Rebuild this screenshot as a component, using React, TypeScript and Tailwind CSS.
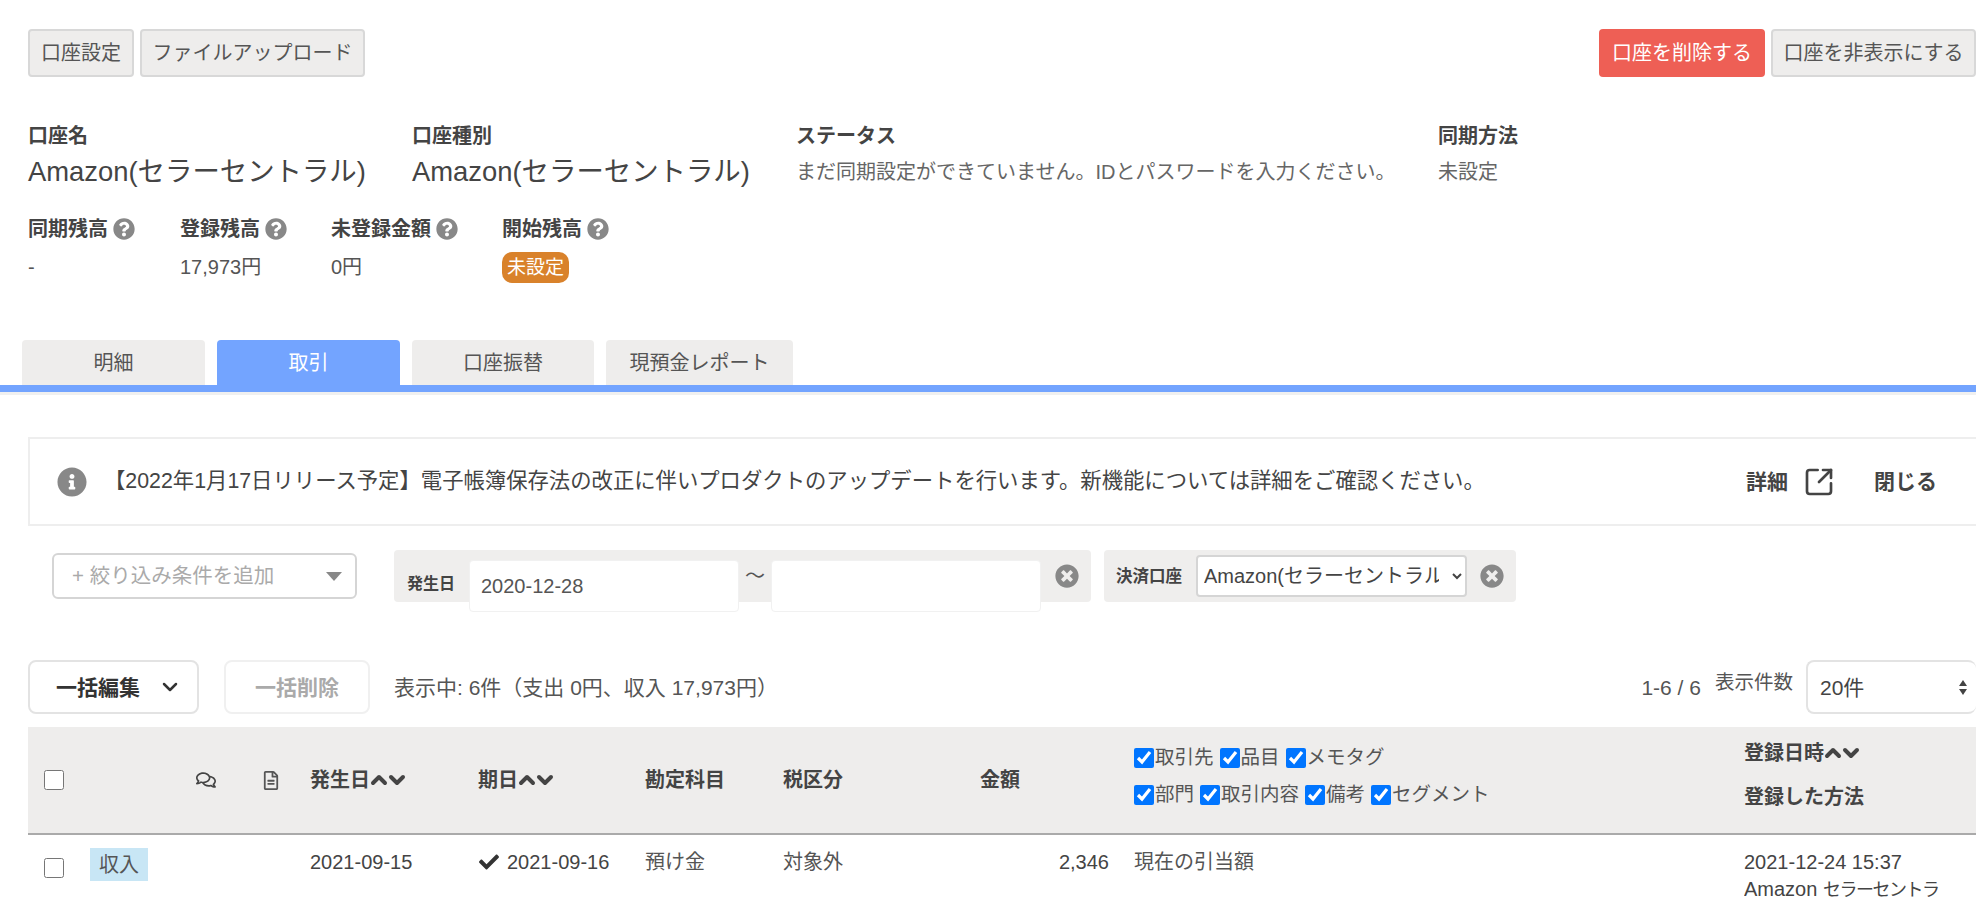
import { ChevronDown, ChevronUp, SquareArrowOutUpRight } from 'lucide-react';
import {
  FaCheck,
  FaInfoCircle,
  FaQuestionCircle,
  FaRegComments,
  FaRegFileAlt,
  FaTimesCircle,
} from 'react-icons/fa';

const font = "font-['Liberation_Sans','Noto_Sans_CJK_JP',sans-serif]";

function GrayButton({ label, width }: { label: string; width: string }) {
  return (
    <button className={`h-12 ${width} rounded border-2 border-[#d8d8d8] bg-[#eeedec] text-[20px] text-[#555]`}>
      {label}
    </button>
  );
}

function Stat({ label, value, width }: { label: string; value: React.ReactNode; width: string }) {
  return (
    <div className={`${width} flex flex-col`}>
      <div className="flex h-6 items-center gap-[5px] text-[20px] font-bold text-[#444]">
        {label}
        <FaQuestionCircle className="h-[22px] w-[22px] text-[#888]" />
      </div>
      <div className="mt-[10px] flex h-8 items-center text-[20px] text-[#555]">{value}</div>
    </div>
  );
}

function Tab({ label, active, width }: { label: string; active?: boolean; width: string }) {
  return (
    <div
      className={`flex h-[45px] ${width} items-center justify-center rounded-t text-[20px] ${
        active ? 'bg-[#73a4ff] text-white' : 'bg-[#eeedec] text-[#555]'
      }`}
    >
      {label}
    </div>
  );
}

function SortArrows() {
  return (
    <span className="-ml-[3px] flex items-center">
      <ChevronUp className="-mr-[6px] h-6 w-6" strokeWidth={4} />
      <ChevronDown className="h-6 w-6" strokeWidth={4} />
    </span>
  );
}

function Check({ label }: { label: string }) {
  return (
    <label className="flex items-center gap-px">
      <input type="checkbox" defaultChecked className="m-0 h-5 w-5" />
      {label}
    </label>
  );
}

function FilterClose() {
  return <FaTimesCircle className="h-6 w-6 text-[#888]" />;
}

export default function App() {
  return (
    <div className={`${font} h-[898px] w-full overflow-hidden bg-white text-[20px] leading-none text-[#444]`}>
      {/* top actions */}
      <div className="flex justify-between pl-7 pt-[29px]">
        <div className="flex gap-[6px]">
          <GrayButton label="口座設定" width="w-[106px]" />
          <GrayButton label="ファイルアップロード" width="w-[225px]" />
        </div>
        <div className="flex gap-[6px]">
          <button className="h-12 w-[166px] rounded bg-[#ee5f55] text-[20px] text-white">口座を削除する</button>
          <GrayButton label="口座を非表示にする" width="w-[205px]" />
        </div>
      </div>

      {/* account summary */}
      <div className="mt-[47px] flex pl-7">
        <div className="w-[384px]">
          <div className="flex h-[24px] items-center font-bold">口座名</div>
          <div className="mt-[10px] flex h-7 items-center whitespace-nowrap text-[27.4px] text-[#444]">
            Amazon(セラーセントラル)
          </div>
        </div>
        <div className="w-[384px]">
          <div className="flex h-[24px] items-center font-bold">口座種別</div>
          <div className="mt-[10px] flex h-7 items-center whitespace-nowrap text-[27.4px] text-[#444]">
            Amazon(セラーセントラル)
          </div>
        </div>
        <div className="w-[642px]">
          <div className="flex h-[24px] items-center font-bold">ステータス</div>
          <div className="mt-[10px] flex h-7 items-center text-[#666]">
            まだ同期設定ができていません。IDとパスワードを入力ください。
          </div>
        </div>
        <div>
          <div className="flex h-[24px] items-center font-bold">同期方法</div>
          <div className="mt-[10px] flex h-7 items-center text-[#666]">未設定</div>
        </div>
      </div>

      <div className="mt-[31px] flex pl-7">
        <Stat label="同期残高" value="-" width="w-[152px]" />
        <Stat label="登録残高" value="17,973円" width="w-[151px]" />
        <Stat label="未登録金額" value="0円" width="w-[171px]" />
        <Stat
          label="開始残高"
          width="w-[200px]"
          value={
            <span className="flex h-[31px] w-[67px] items-center justify-center rounded-[10px] bg-[#d9822b] text-[19px] text-white">
              未設定
            </span>
          }
        />
      </div>

      {/* tabs */}
      <div className="mt-[57px] flex gap-3 pl-[22px]">
        <Tab label="明細" width="w-[183px]" />
        <Tab label="取引" width="w-[183px]" active />
        <Tab label="口座振替" width="w-[182px]" />
        <Tab label="現預金レポート" width="w-[187px]" />
      </div>
      <div className="h-[7px] bg-[#73a4ff]" />
      <div className="h-[3px] bg-[#f0f0f0]" />

      {/* notice */}
      <div className="ml-7 mt-[42px] flex h-[89px] items-center border-2 border-r-0 border-[#eeeeee] pl-[27px] pr-[39px]">
        <FaInfoCircle className="h-[30px] w-[30px] text-[#888]" />
        <div className="ml-[17px] flex-1 whitespace-nowrap text-[21.35px] text-[#444]">
          【2022年1月17日リリース予定】電子帳簿保存法の改正に伴いプロダクトのアップデートを行います。新機能については詳細をご確認ください。
        </div>
        <span className="text-[21px] font-bold">詳細</span>
        <SquareArrowOutUpRight className="ml-[15px] h-8 w-8" strokeWidth={2} />
        <span className="ml-[39px] text-[21px] font-bold">閉じる</span>
      </div>

      {/* filters */}
      <div className="ml-[52px] mt-[24px] flex items-start">
        <div className="mt-[3px] flex h-[46px] w-[305px] items-center justify-between rounded-md border-2 border-[#d5d5d5] pl-[18px] pr-[13px] text-[20.5px] text-[#aaa]">
          <span>+ 絞り込み条件を追加</span>
          <span className="h-0 w-0 border-x-[8px] border-t-[9px] border-x-transparent border-t-[#888]" />
        </div>
        <div className="relative ml-[37px] flex h-[52px] w-[697px] items-center rounded bg-[#efeeed] pl-[13px]">
          <span className="mt-4 w-[62px] text-[16px] font-bold">発生日</span>
          <div className="mt-[20px] flex h-[52px] w-[270px] items-center rounded border border-[#f1f1f1] bg-white pl-[11px] text-[#555]">
            2020-12-28
          </div>
          <span className="w-[32px] text-center text-[#555]">～</span>
          <div className="mt-[20px] h-[52px] w-[270px] rounded border border-[#f1f1f1] bg-white" />
          <span className="ml-[14px]">
            <FilterClose />
          </span>
        </div>
        <div className="ml-[13px] flex h-[52px] w-[412px] items-center rounded bg-[#efeeed] pl-3">
          <span className="w-[80px] text-[16.5px] font-bold">決済口座</span>
          <select className="h-[42px] w-[271px] rounded border-2 border-[#d5d5d5] bg-white pl-[2px] pr-[10px] text-[20px] text-[#444]">
            <option>Amazon(セラーセントラル)</option>
          </select>
          <span className="ml-[13px]">
            <FilterClose />
          </span>
        </div>
      </div>

      {/* toolbar */}
      <div className="ml-7 mt-[58px] flex h-[54px] items-center text-[21px]">
        <button className="flex h-full w-[171px] items-center gap-[18px] rounded-lg border-2 border-[#e3e3e3] bg-white pl-[26px] font-bold text-[#333]">
          一括編集
          <ChevronDown className="h-6 w-6" strokeWidth={2.5} />
        </button>
        <button className="ml-[25px] h-full w-[146px] rounded-lg border-2 border-[#f0f0f0] bg-white font-bold text-[#aaa]">
          一括削除
        </button>
        <span className="ml-6 text-[#555]">表示中: 6件（支出 0円、収入 17,973円）</span>
        <span className="ml-auto text-[#555]">1-6 / 6</span>
        <span className="-mt-2 ml-[14px] text-[19.5px] text-[#555]">表示件数</span>
        <div className="ml-[13px] flex h-full w-[170px] items-center justify-between rounded-lg border-2 border-r-0 border-[#e3e3e3] pl-[12px] pr-[9px] text-[#444]">
          20件
          <span className="flex flex-col gap-[3px]">
            <span className="h-0 w-0 border-x-[4px] border-b-[6px] border-x-transparent border-b-[#444]" />
            <span className="h-0 w-0 border-x-[4px] border-t-[6px] border-x-transparent border-t-[#444]" />
          </span>
        </div>
      </div>

      {/* table */}
      <div className="ml-7 mt-[13px]">
        <div className="flex h-[108px] items-center border-b-2 border-[#aaaaaa] bg-[#eeedec] font-bold text-[#444]">
          <div className="w-[168px] pl-4">
            <input type="checkbox" className="m-0 block h-5 w-5" />
          </div>
          <div className="w-[67px]">
            <FaRegComments className="h-5 w-5 text-[#444]" />
          </div>
          <div className="w-[47px]">
            <FaRegFileAlt className="h-[19px] w-[16px] text-[#555]" />
          </div>
          <div className="flex w-[168px] items-center">
            発生日
            <SortArrows />
          </div>
          <div className="flex w-[167px] items-center">
            期日
            <SortArrows />
          </div>
          <div className="w-[138px]">勘定科目</div>
          <div className="w-[197px]">税区分</div>
          <div className="w-[154px]">金額</div>
          <div className="mb-[8px] flex w-[610px] flex-col gap-[17px] text-[19.5px] font-normal text-[#555]">
            <div className="flex gap-[6px]">
              <Check label="取引先" />
              <Check label="品目" />
              <Check label="メモタグ" />
            </div>
            <div className="flex gap-[6px]">
              <Check label="部門" />
              <Check label="取引内容" />
              <Check label="備考" />
              <Check label="セグメント" />
            </div>
          </div>
          <div className="mb-[13px] flex flex-col gap-[22px]">
            <div className="flex items-center">
              登録日時
              <SortArrows />
            </div>
            <div>登録した方法</div>
          </div>
        </div>

        <div className="flex h-[70px] items-start text-[#444]">
          <div className="flex w-[282px] items-start pl-4 pt-[23px]">
            <input type="checkbox" className="m-0 block h-5 w-5" />
            <span className="-mt-[10px] ml-[26px] flex h-[33px] w-[58px] items-center justify-center bg-[#c8e6f5] text-[#555]">
              収入
            </span>
          </div>
          <div className="w-[168px] pt-[17px]">2021-09-15</div>
          <div className="flex w-[167px] items-center gap-[7px] pt-[17px]">
            <FaCheck className="h-[20px] w-[22px] text-[#333]" />
            2021-09-16
          </div>
          <div className="w-[138px] pt-[17px] text-[#555]">預け金</div>
          <div className="w-[197px] pt-[17px] text-[#555]">対象外</div>
          <div className="w-[129px] pt-[17px] text-right">2,346</div>
          <div className="ml-[25px] w-[610px] pt-[17px] text-[#555]">現在の引当額</div>
          <div className="w-[232px] pt-[17px]">
            <div>2021-12-24 15:37</div>
            <div className="mt-[7px] h-5 w-[208px] overflow-hidden">
              Amazon <span className="text-[18px] tracking-[-1.5px]">セラーセントラル</span>
            </div>
          </div>
        </div>
      </div>
    </div>
  );
}
